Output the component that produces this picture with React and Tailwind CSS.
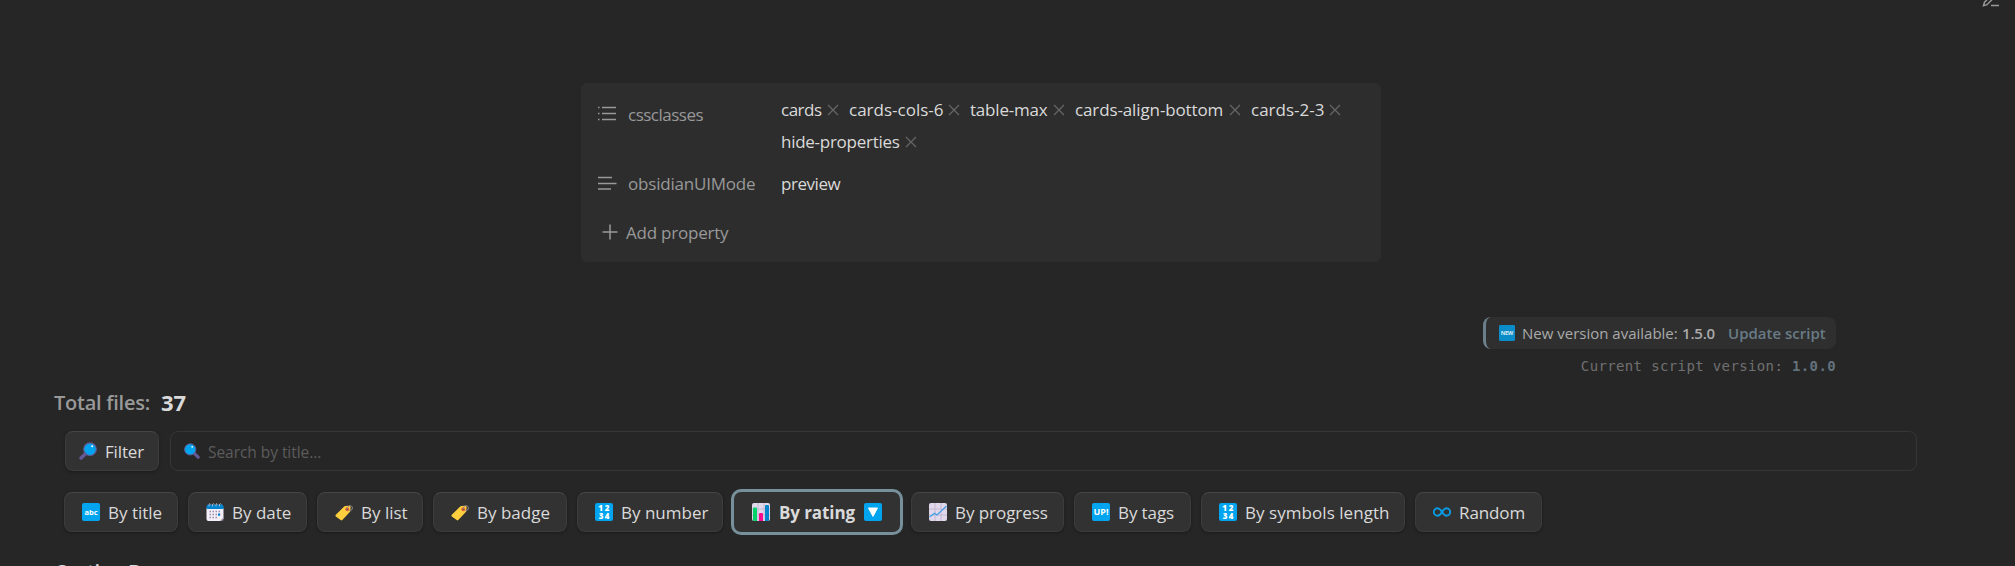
import React from 'react';

function Ic({ children, className = 'h-[18px] w-[18px]' }) {
  return (
    <svg viewBox="0 0 18 18" className={'shrink-0 ' + className} fill="none">
      {children}
    </svg>
  );
}

const BLUE = '#00a4ef';

function Lens({ flip, className }) {
  return (
    <Ic className={className}>
      <g transform={flip ? 'translate(18 0) scale(-1 1)' : undefined}>
        <path d="M7 11.2 2.1 16" stroke="#635994" strokeWidth="3.6" strokeLinecap="round" />
        <circle cx="11" cy="7.2" r="6.3" fill={BLUE} stroke="#635994" strokeWidth="1.1" />
      </g>
      <circle cx={flip ? 9.2 : 13.2} cy="4.3" r="1" fill="#fff" />
    </Ic>
  );
}

function Tile({ children }) {
  return (
    <Ic>
      <rect width="18" height="18" rx="2" fill={BLUE} />
      {children}
    </Ic>
  );
}

const Abc = () => (
  <Tile>
    <text x="9" y="11.5" textAnchor="middle" fontFamily="Open Sans, sans-serif" fontWeight="700" fontSize="7.5" fill="#fff">abc</text>
  </Tile>
);
const Up = () => (
  <Tile>
    <text x="9" y="12.4" textAnchor="middle" fontFamily="Open Sans, sans-serif" fontWeight="700" fontSize="9.5" textLength="15" lengthAdjust="spacingAndGlyphs" fill="#fff">UP!</text>
  </Tile>
);
const Numbers = () => (
  <Tile>
    <g fontFamily="Open Sans, sans-serif" fontWeight="800" fontSize="8" fill="#fff" textAnchor="middle">
      <text x="5.6" y="8.2">1</text>
      <text x="12" y="8.2">2</text>
      <text x="6" y="15.6">3</text>
      <text x="12" y="15.6">4</text>
    </g>
  </Tile>
);
const Down = () => (
  <Tile>
    <path d="M4.5 5h9L9 13.4z" fill="#fff" stroke="#fff" strokeWidth="1" strokeLinejoin="round" />
  </Tile>
);
const Calendar = () => (
  <Ic>
    <path d="M.5 5h17v10.5l-2.500 2.500H2.500a2 2 0 0 1-2-2z" fill="#f3eef8" />
    <path d="M.5 6V3.500a2 2 0 0 1 2-2h13a2 2 0 0 1 2 2V6z" fill="#0084ce" />
    <path d="M17.500 14.500 14 18h1.500a2 2 0 0 0 2-2z" fill="#998ea4" />
    <path d="M3 3.300V1.500q1-1.800 1.700 0M6.500 3.300V1.500q1-1.800 1.700 0M10 3.300V1.500q1-1.800 1.700 0M13.500 3.300V1.500q1-1.800 1.700 0" stroke="#cdc4d6" strokeWidth=".9" />
    <path d="M3.500 8.500h11M3.500 11.500h11M3.500 14.500h8" stroke="#998ea4" strokeWidth="1.500" strokeDasharray="1.500 1.500" />
    <rect x="12" y="10.500" width="2.200" height="2.200" fill="#0084ce" />
  </Ic>
);
const Tag = () => (
  <Ic>
    <path d="m.8 11.800 8.400-8.300q.5-.5 1.200-.5l4-.3q1.200 0 1.200 1.200l-.3 4q0 .7-.5 1.200l-7.500 8q-.8.8-1.600 0L.8 13.400q-.7-.8 0-1.600z" fill="#ffcf3d" />
    <circle cx="12.300" cy="6.200" r="1.500" fill="#8a5a3c" stroke="#f0533a" strokeWidth="1" />
    <path d="M12.300 6.200C12 3.500 14 2.500 15.500 2.700s2.300 1.700 1.700 3.300-1.900 1.800-3 1.700" stroke="#8c8a90" strokeWidth="1" />
  </Ic>
);
const Grid = () => (
  <>
    <rect width="18" height="18" rx="2" fill="#e1d8ec" />
    <path d="M6 0v18M12 0v18M0 6h18M0 12h18" stroke="#c2b5cf" strokeWidth=".9" />
  </>
);
const Bars = () => (
  <Ic>
    <Grid />
    <path d="M1 5.500q0-1 1-1h2q1 0 1 1V18H2q-1 0-1-1z" fill="#00d26a" />
    <path d="M7 11q0-1 1-1h2q1 0 1 1v7H7z" fill="#f70a8d" />
    <path d="M13 3q0-1 1-1h2q1 0 1 1v14q0 1-1 1h-3z" fill="#0084ce" />
  </Ic>
);
const Chart = () => (
  <Ic>
    <Grid />
    <path d="m.5 14 5-3.800 2.500 1.800 9.500-9" stroke="#3f9fe8" strokeWidth="1.200" />
  </Ic>
);
const Infinity8 = () => (
  <Ic>
    <path d="M9 9C7.500 6.500 6.400 5.200 4.600 5.200a3.700 3.700 0 0 0 0 7.500C6.500 12.700 7.600 11.400 9 9s2.500-3.800 4.400-3.800a3.700 3.700 0 0 1 0 7.500C11.500 12.700 10.500 11.400 9 9z" stroke="#0a9be3" strokeWidth="1.900" />
  </Ic>
);

const X = () => (
  <svg viewBox="0 0 12 12" className="ml-auto h-3 w-3 shrink-0" fill="none" stroke="#666" strokeWidth="1.200">
    <path d="m1 1 10 10M11 1 1 11" />
  </svg>
);

function Pill({ label, w, text = '' }) {
  return (
    <span className={'flex h-8 items-center whitespace-nowrap ' + w}>
      <span className={text}>{label}</span>
      <X />
    </span>
  );
}

function SortButton({ icon, label, w, text = 'tracking-[-0.2px]' }) {
  return (
    <button className={'flex h-10 shrink-0 items-center gap-2 rounded-lg border border-[#3c3c3c] border-t-[#464646] bg-[#323232] pl-[17px] whitespace-nowrap text-[#dadada] shadow-[0_1px_3px_rgba(0,0,0,0.35)] ' + w}>
      {icon}
      <span className={text}>{label}</span>
    </button>
  );
}

export default function App() {
  return (
    <div className="flex h-[566px] w-[2015px] flex-col overflow-hidden bg-[#262626] font-['Open_Sans',sans-serif] text-[17px] leading-6 text-[#dadada]">
      <div className="flex h-[83px] shrink-0 justify-end pr-[15px]">
        <svg viewBox="0 0 18 18" className="-mt-[10px] h-[18px] w-[18px]" fill="none" stroke="#9a9a9a" strokeWidth="1.400">
          <path d="M9 15.500h8M12.400 2.600a1.600 1.600 0 0 1 2.300 2.300L5 14.700l-3.500 1 1-3.500z" />
        </svg>
      </div>

      <section className="ml-[581px] flex h-[179px] w-[800px] shrink-0 flex-col rounded-md bg-[#2d2d2d] pt-[11px] pl-4">
        <div className="flex h-[73px]">
          <div className="flex h-10 w-[184px] items-center text-[#999]">
            <svg viewBox="0 0 20 16" className="h-4 w-5" stroke="#999" strokeWidth="1.500">
              <path d="M5 1.500h14M5 7.500h14M5 13.500h14M1 1.500h1.500M1 7.500h1.500M1 13.500h1.500" />
            </svg>
            <span className="ml-[11px] pt-0.5 tracking-[-0.5px]">cssclasses</span>
          </div>
          <div className="flex w-[600px] flex-wrap content-start gap-x-[10px]">
            <Pill label="cards" w="w-[58px]" text="tracking-[-0.5px]" />
            <Pill label="cards-cols-6" w="w-[111px]" />
            <Pill label="table-max" w="w-[95px]" text="tracking-[-0.2px]" />
            <Pill label="cards-align-bottom" w="w-[166px]" text="tracking-[-0.12px]" />
            <Pill label="cards-2-3" w="w-[90px]" />
            <Pill label="hide-properties" w="w-[136px]" text="tracking-[-0.27px]" />
          </div>
        </div>
        <div className="flex h-8 items-center">
          <div className="flex w-[184px] items-center text-[#999]">
            <svg viewBox="0 0 20 16" className="h-4 w-5" stroke="#999" strokeWidth="1.500">
              <path d="M1 2.500h14M1 8.500h18.500M1 14h13" />
            </svg>
            <span className="ml-[11px] pt-0.5 tracking-[-0.2px]">obsidianUIMode</span>
          </div>
          <span className="pt-0.5 tracking-[-0.45px]">preview</span>
        </div>
        <div className="mt-[17px] flex h-8 items-center pl-[5px] text-[#999]">
          <svg viewBox="0 0 16 16" className="-mt-px h-4 w-4" stroke="#999" strokeWidth="1.500">
            <path d="M8 .5v15M.5 8h15" />
          </svg>
          <span className="ml-2 pt-0.5 tracking-[-0.22px]">Add property</span>
        </div>
      </section>

      <section className="mt-[55px] flex h-[61px] shrink-0 flex-col items-end pr-[179px]">
        <div className="flex h-[34px] w-[353px] items-center rounded-lg border-l-[3px] border-[#6c808b] bg-[#2f2f2f] pl-[13px] text-[15px] whitespace-nowrap text-[#aaa]">
          <Ic className="h-4 w-4">
            <rect width="18" height="18" rx="1.500" fill="#0a8cc8" />
            <text x="9" y="11.500" textAnchor="middle" fontFamily="Open Sans, sans-serif" fontWeight="700" fontSize="6.500" textLength="14" fill="#d8e8f0">NEW</text>
          </Ic>
          <span className="ml-[7px] w-[160px]">New version available:</span>
          <b className="w-[46px] font-semibold tracking-[-0.2px]">1.5.0</b>
          <span className="font-semibold text-[#687b86]">Update script</span>
        </div>
        <div className="mt-[5px] font-['DejaVu_Sans_Mono',monospace] text-[14px] tracking-[0.37px] text-[#707070]">
          Current script version: <b className="font-bold text-[#62717c]">1.0.0</b>
        </div>
      </section>

      <div className="ml-[54px] mt-[9px] flex h-8 shrink-0 items-center text-[20px] font-semibold text-[#999]">
        <span className="w-[107px] tracking-[-0.25px]">Total files:</span>
        <b className="-mt-0.5 text-[22px] font-bold text-[#dadada]">37</b>
      </div>

      <div className="ml-[65px] mt-3 flex h-10 shrink-0 gap-[11px]">
        <button className="flex h-10 w-[94px] items-center gap-2 rounded-lg border border-[#3c3c3c] border-t-[#464646] bg-[#323232] pl-[13px] shadow-[0_1px_3px_rgba(0,0,0,0.35)]">
          <Lens />
          <span className="pt-0.5 tracking-[-0.15px]">Filter</span>
        </button>
        <div className="flex h-10 w-[1747px] items-center gap-2 rounded-lg border border-[#363636] pl-[13px] text-[15.500px] text-[#5c5c5c]">
          <Lens flip className="h-4 w-4" />
          <span className="pt-0.5 tracking-[-0.05px]">Search by title...</span>
        </div>
      </div>

      <div className="ml-16 mt-[21px] flex h-10 shrink-0 items-center gap-[10px]">
        <SortButton icon={<Abc />} label="By title" w="w-[114px]" text="pt-0.5 tracking-normal" />
        <SortButton icon={<Calendar />} label="By date" w="w-[119px]" text="pt-0.5 tracking-normal" />
        <SortButton icon={<Tag />} label="By list" w="w-[106px]" text="pt-0.5 tracking-normal" />
        <SortButton icon={<Tag />} label="By badge" w="w-[134px]" text="pt-0.5 tracking-normal" />
        <SortButton icon={<Numbers />} label="By number" w="w-[146px]" text="pt-0.5 tracking-normal" />
        <button className="-mx-[2px] flex h-[46px] w-[172px] shrink-0 items-center gap-2 rounded-[10px] border-[3px] border-[#78909c] bg-[#323232] pl-[18px] font-bold whitespace-nowrap">
          <Bars />
          <span className="w-[78px] pt-0.5 tracking-[-0.1px]">By rating</span>
          <Down />
        </button>
        <SortButton icon={<Chart />} label="By progress" w="w-[153px]" text="pt-0.5 tracking-[-0.05px]" />
        <SortButton icon={<Up />} label="By tags" w="w-[117px]" text="pt-0.5 tracking-[-0.1px]" />
        <SortButton icon={<Numbers />} label="By symbols length" w="w-[204px]" text="pt-0.5 tracking-[0.05px]" />
        <SortButton icon={<Infinity8 />} label="Random" w="w-[127px]" text="pt-0.5 tracking-[-0.1px]" />
      </div>

      <div className="ml-[56px] mt-[25px] h-10 shrink-0 text-[20px] leading-[30px] font-semibold tracking-[-0.3px]">Sorting By</div>
    </div>
  );
}
